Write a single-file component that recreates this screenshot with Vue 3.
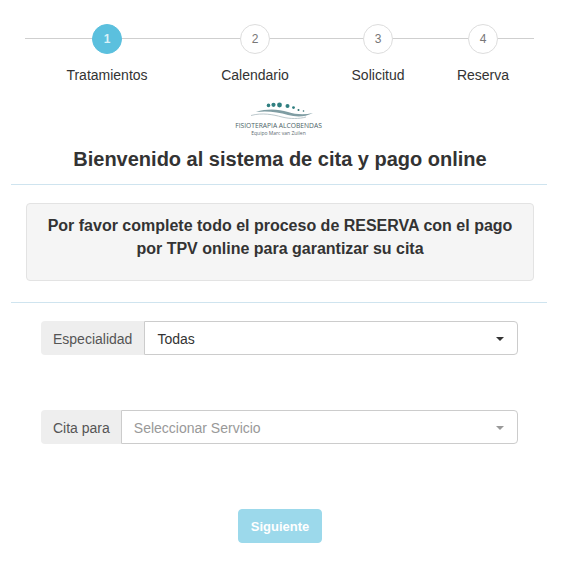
<script setup>
const steps = [
  { n: 1, label: 'Tratamientos', active: true },
  { n: 2, label: 'Calendario' },
  { n: 3, label: 'Solicitud' },
  { n: 4, label: 'Reserva' }
]
</script>

<template>
  <div class="page">
    <div class="stepper">
      <div v-for="s in steps" :key="s.n" class="step">
        <span class="circle" :class="{ active: s.active }">{{ s.n }}</span>
        <span class="step-label">{{ s.label }}</span>
      </div>
    </div>

    <div class="logo">
      <svg class="logo-mark" width="70" height="20" viewBox="0 0 70 20">
        <circle cx="24.5" cy="3.4" r="1.8" fill="#2f7f80" />
        <circle cx="29.5" cy="2.8" r="2.1" fill="#2f7f80" />
        <circle cx="35.5" cy="3" r="2.4" fill="#2f7f80" />
        <circle cx="43.5" cy="4" r="2" fill="#2f7f80" />
        <circle cx="49.5" cy="5.6" r="1.4" fill="#2f7f80" />
        <circle cx="54.5" cy="8" r="1" fill="#2f6f70" />
        <circle cx="59.5" cy="9" r="0.8" fill="#2f6f70" />
        <path d="M12 10 C23 6.5 34 7 44 10 C52 12.5 60 13 69 11 C60 15.5 52 15 44 13 C34 10 23 8.5 12 10Z" fill="#7f9da3" />
        <path d="M7 13.5 C18 10.5 29 12.5 38 15 C46 17 55 17 62 15" fill="none" stroke="#b4c2c6" stroke-width="0.9" />
      </svg>
      <div class="logo-name">FISIOTERAPIA ALCOBENDAS</div>
      <div class="logo-sub">Equipo Marc van Zuilen</div>
    </div>

    <h1 class="title">Bienvenido al sistema de cita y pago online</h1>
    <hr class="rule" />

    <div class="well">
      Por favor complete todo el proceso de RESERVA con el pago<br />
      por TPV online para garantizar su cita
    </div>

    <hr class="rule rule-second" />

    <div class="field">
      <span class="addon">Especialidad</span>
      <div class="select">
        <span class="value">Todas</span>
        <span class="caret"></span>
      </div>
    </div>

    <div class="field field-second">
      <span class="addon">Cita para</span>
      <div class="select">
        <span class="value placeholder">Seleccionar Servicio</span>
        <span class="caret caret-muted"></span>
      </div>
    </div>

    <div class="actions">
      <button class="next" type="button">Siguiente</button>
    </div>
  </div>
</template>

<style scoped>
.page {
  position: relative;
  width: 569px;
  height: 567px;
  box-sizing: border-box;
  padding-top: 24px;
  background: #fff;
  color: #333;
  font-family: "Liberation Sans", Arial, sans-serif;
  font-size: 14px;
  overflow: hidden;
}
.stepper {
  position: relative;
  display: grid;
  grid-template-columns: 164px 132px 114px 96px;
  width: 509px;
  margin-left: 25px;
}
.stepper::before {
  content: "";
  position: absolute;
  left: 0;
  right: 0;
  top: 14px;
  height: 1px;
  background: #cfcfcf;
}
.step {
  position: relative;
  display: flex;
  flex-direction: column;
  align-items: center;
}
.circle {
  width: 30px;
  height: 30px;
  box-sizing: border-box;
  display: flex;
  align-items: center;
  justify-content: center;
  border: 1px solid #ddd;
  border-radius: 50%;
  background: #fff;
  color: #777;
  font-size: 12px;
}
.circle.active {
  background: #5bc0de;
  border-color: #5bc0de;
  color: #d9f1f8;
  font-weight: 700;
}
.step-label {
  margin-top: 12px;
  line-height: 18px;
  white-space: nowrap;
  color: #333;
}
.logo {
  margin-top: 18px;
  padding-right: 12px;
  display: flex;
  flex-direction: column;
  align-items: center;
  height: 34px;
}
.logo-mark {
  display: block;
}
.logo-name {
  font-family: "Open Sans", sans-serif;
  font-size: 6.7px;
  line-height: 8px;
  color: #4b5f66;
  white-space: nowrap;
}
.logo-sub {
  font-family: "Open Sans", sans-serif;
  font-size: 5px;
  line-height: 6px;
  color: #5d6c72;
  white-space: nowrap;
}
.title {
  margin: 10px 0 0;
  text-align: center;
  font-size: 20px;
  line-height: 26px;
  font-weight: 700;
  color: #333;
  padding-right: 9px;
}
.rule {
  width: 536px;
  height: 1px;
  margin: 12px 0 0 11px;
  border: 0;
  background: #cfe4ef;
}
.rule-second {
  margin-top: 21px;
}
.well {
  width: 508px;
  height: 78px;
  box-sizing: border-box;
  margin: 18px 0 0 26px;
  padding: 10px 8px 0;
  background: #f5f5f5;
  border: 1px solid #e3e3e3;
  border-radius: 4px;
  text-align: center;
  font-size: 16px;
  font-weight: 700;
  line-height: 23px;
  color: #333;
}
.field {
  display: flex;
  width: 477px;
  height: 34px;
  margin: 18px 0 0 41px;
}
.field-second {
  margin-top: 55px;
}
.addon {
  display: flex;
  align-items: center;
  padding: 1px 12px 0;
  background: #eee;
  border-radius: 4px 0 0 4px;
  color: #555;
  white-space: nowrap;
}
.field-second .addon {
  padding-right: 11px;
}
.select {
  flex: 1;
  display: flex;
  align-items: center;
  justify-content: space-between;
  box-sizing: border-box;
  padding: 1px 12px 0 12px;
  background: #fff;
  border: 1px solid #ccc;
  border-radius: 0 4px 4px 0;
}
.value {
  color: #333;
}
.placeholder {
  color: #999;
}
.caret {
  width: 0;
  height: 0;
  margin-right: 1px;
  border-left: 4px solid transparent;
  border-right: 4px solid transparent;
  border-top: 4px solid #333;
}
.caret-muted {
  border-top-color: #999;
}
.actions {
  display: flex;
  justify-content: center;
  margin-top: 65px;
  padding-right: 9px;
}
.next {
  width: 84px;
  height: 34px;
  padding: 0;
  border: 1px solid #5bc0de;
  border-radius: 4px;
  background: #5bc0de;
  color: #fff;
  font-family: inherit;
  font-size: 13px;
  font-weight: 700;
  opacity: 0.6;
}
</style>
